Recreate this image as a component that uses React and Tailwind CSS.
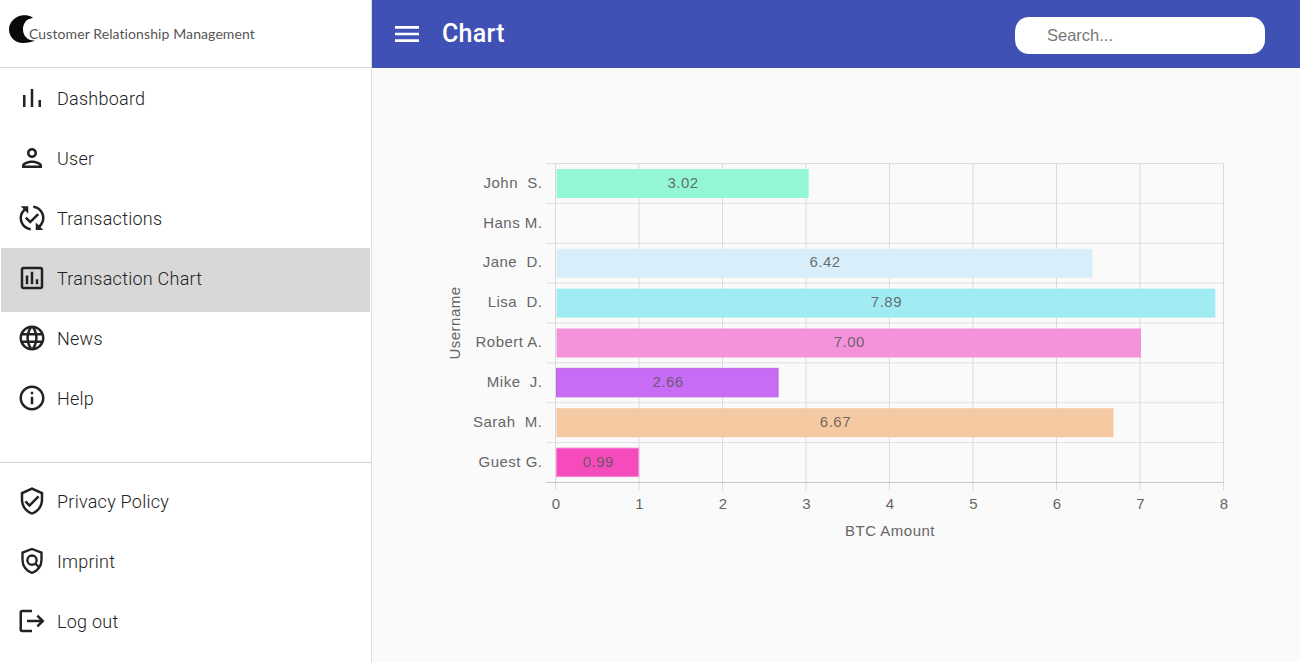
import {
  MdInfoOutline,
  MdLanguage,
  MdLogout,
  MdMenu,
  MdOutlineAssessment,
  MdOutlinePerson,
  MdOutlineVerifiedUser,
  MdPublishedWithChanges,
} from 'react-icons/md';

const MAIN_NAV = [
  { label: 'Dashboard', icon: ThinBars },
  { label: 'User', icon: MdOutlinePerson },
  { label: 'Transactions', icon: MdPublishedWithChanges },
  { label: 'Transaction Chart', icon: MdOutlineAssessment, active: true },
  { label: 'News', icon: MdLanguage },
  { label: 'Help', icon: MdInfoOutline },
];

const FOOTER_NAV = [
  { label: 'Privacy Policy', icon: MdOutlineVerifiedUser },
  { label: 'Imprint', icon: ShieldSearch },
  { label: 'Log out', icon: MdLogout },
];

const CHART_DATA = [
  { name: 'John  S.', value: 3.02, fill: '#93f7d6' },
  { name: 'Hans M.', value: 0, fill: 'transparent' },
  { name: 'Jane  D.', value: 6.42, fill: '#d8eefa' },
  { name: 'Lisa  D.', value: 7.89, fill: '#a1ebf2' },
  { name: 'Robert A.', value: 7.0, fill: '#f592dc' },
  { name: 'Mike  J.', value: 2.66, fill: '#c96cf5', stroke: '#bd6ae6' },
  { name: 'Sarah  M.', value: 6.67, fill: '#f5c9a1' },
  { name: 'Guest G.', value: 0.99, fill: '#f54bbd', stroke: '#f78ad4' },
];

const X0 = 555.5;
const X_UNIT = 83.5;
const Y0 = 163.5;
const ROW = 39.87;
const CHART_FONT = '"Liberation Sans", Arial, sans-serif';

function ThinBars({ size }) {
  return (
    <svg width={size} height={size} viewBox="0 0 24 24" fill="currentColor">
      <path d="M4.8 9.6h2v9.6h-2zM11 4.8h2v14.4h-2zM17.2 13.6h2v5.6h-2z" />
    </svg>
  );
}

function ShieldSearch({ size }) {
  return (
    <svg width={size} height={size} viewBox="0 0 24 24" fill="none" stroke="currentColor" strokeWidth="1.9">
      <path d="M12 2.4 19.6 5.3v5.9c0 4.8-3.1 9-7.6 10.3-4.500-1.300-7.600-5.500-7.600-10.300V5.300z" />
      <circle cx="12" cy="11.3" r="3.7" />
      <path d="M14.7 14 17.6 17" />
    </svg>
  );
}

const NavItem = ({ label, icon: Icon, active }) => (
  <div
    className={`flex items-center text-[18px] font-light text-[#222] tracking-[0.25px] ${
      active ? 'relative mx-px mb-[-4px] h-[64px] bg-[#d8d8d8] pb-[4px] pl-[16px]' : 'h-[60px] pl-[17px]'
    }`}
  >
    <span className="flex w-[40px] shrink-0 text-[#222]">
      <Icon size={30} />
    </span>
    <span className="relative">{label}</span>
  </div>
);

const BarChart = () => (
  <svg width="928" height="594" viewBox="372 68 928 594" className="block">
    {/* vertical grid lines */}
    {[0, 1, 2, 3, 4, 5, 6, 7, 8].map((tick) => (
      <g key={tick}>
        <line
          x1={X0 + tick * X_UNIT}
          x2={X0 + tick * X_UNIT}
          y1={Y0}
          y2={Y0 + 8 * ROW + 8}
          stroke="#dadadd"
          strokeWidth="1"
        />
        <text
          x={X0 + 0.5 + tick * X_UNIT}
          y={509}
          textAnchor="middle"
          fontSize="15"
          fill="#666"
          fontFamily={CHART_FONT}
        >
          {tick}
        </text>
      </g>
    ))}

    {/* horizontal grid lines */}
    {[0, 1, 2, 3, 4, 5, 6, 7, 8].map((row) => (
      <line
        key={row}
        x1={546}
        x2={X0 + 8 * X_UNIT}
        y1={Y0 + row * ROW}
        y2={Y0 + row * ROW}
        stroke={row === 8 ? '#c6c6c8' : '#dfdfe2'}
        strokeWidth="1"
      />
    ))}

    {CHART_DATA.map((d, i) => {
      const y = Y0 + i * ROW;
      const width = d.value * X_UNIT;
      return (
        <g key={d.name} fontFamily={CHART_FONT} fontSize="15">
          <text
            x={542.5}
            y={y + 24.2}
            textAnchor="end"
            fill="#666"
            letterSpacing="0.5"
            style={{ whiteSpace: 'pre' }}
          >
            {d.name}
          </text>
          {d.value > 0 && (
            <>
              <rect
                x={X0 + 1}
                y={y + 5.5}
                width={d.stroke ? width - 0.5 : width}
                height={d.stroke ? 28.5 : 29}
                fill={d.fill}
                stroke={d.stroke || 'none'}
              />
              <text
                x={X0 + 1.5 + width / 2}
                y={y + 24.2}
                textAnchor="middle"
                fill="#555"
                fillOpacity="0.85"
                letterSpacing="0.5"
              >
                {d.value.toFixed(2)}
              </text>
            </>
          )}
        </g>
      );
    })}

    <text
      x={890}
      y={536}
      textAnchor="middle"
      fontSize="15"
      fill="#666"
      letterSpacing="0.5"
      fontFamily={CHART_FONT}
    >
      BTC Amount
    </text>
    <text
      transform="translate(460 323) rotate(-90)"
      textAnchor="middle"
      fontSize="15"
      fill="#666"
      letterSpacing="0.5"
      fontFamily={CHART_FONT}
    >
      Username
    </text>
  </svg>
);

export default function App() {
  return (
    <div className="flex h-[662px] w-full overflow-hidden bg-[#fafafa] font-['Roboto',sans-serif]">
      {/* Sidebar */}
      <aside className="flex w-[372px] shrink-0 flex-col border-r border-[#dcdcdc] bg-white">
        <div className="flex h-[68px] shrink-0 items-center border-b border-[#d8d8e0] pl-[9px]">
          <svg width="27" height="29" viewBox="0 0 27 29" className="mt-[-9px] shrink-0">
            <path
              d="M24 2.500C21 .5 17 0 14 .2 6 1 0 7 0 14.500 0 22 6 28 14 28c5 0 9-1 12-2.500-7 .5-12-4.500-12-11 0-4.500 2-8.500 5-10 1-.5 3-1 5-2z"
              fill="#0a0a0a"
            />
          </svg>
          <span className="ml-[-7px] font-['Lato',sans-serif] text-[14px] leading-none tracking-[0.1px] whitespace-nowrap text-[#555]">
            Customer Relationship Management
          </span>
        </div>
        <nav className="flex flex-col">
          {MAIN_NAV.map((item) => (
            <NavItem key={item.label} {...item} />
          ))}
        </nav>
        <div className="mt-auto border-t border-[#d2d2d2] pt-[8px] pb-[11px]">
          {FOOTER_NAV.map((item) => (
            <NavItem key={item.label} {...item} />
          ))}
        </div>
      </aside>

      {/* Main */}
      <div className="flex min-w-0 flex-1 flex-col">
        <header className="flex h-[68px] shrink-0 items-center bg-[#3f51b5] pr-[35px] pl-[19px] text-white">
          <MdMenu size={32} className="shrink-0" />
          <h1 className="ml-[19px] text-[25px] font-medium tracking-[0.3px]">Chart</h1>
          <input
            type="text"
            placeholder="Search..."
            className="mt-[2px] ml-auto h-[37px] w-[250px] rounded-[14px] bg-white pl-[32px] font-['Liberation_Sans',Arial,sans-serif] text-[16.5px] text-[#333] outline-none placeholder:text-[#777]"
          />
        </header>
        <main className="flex-1">
          <BarChart />
        </main>
      </div>
    </div>
  );
}
